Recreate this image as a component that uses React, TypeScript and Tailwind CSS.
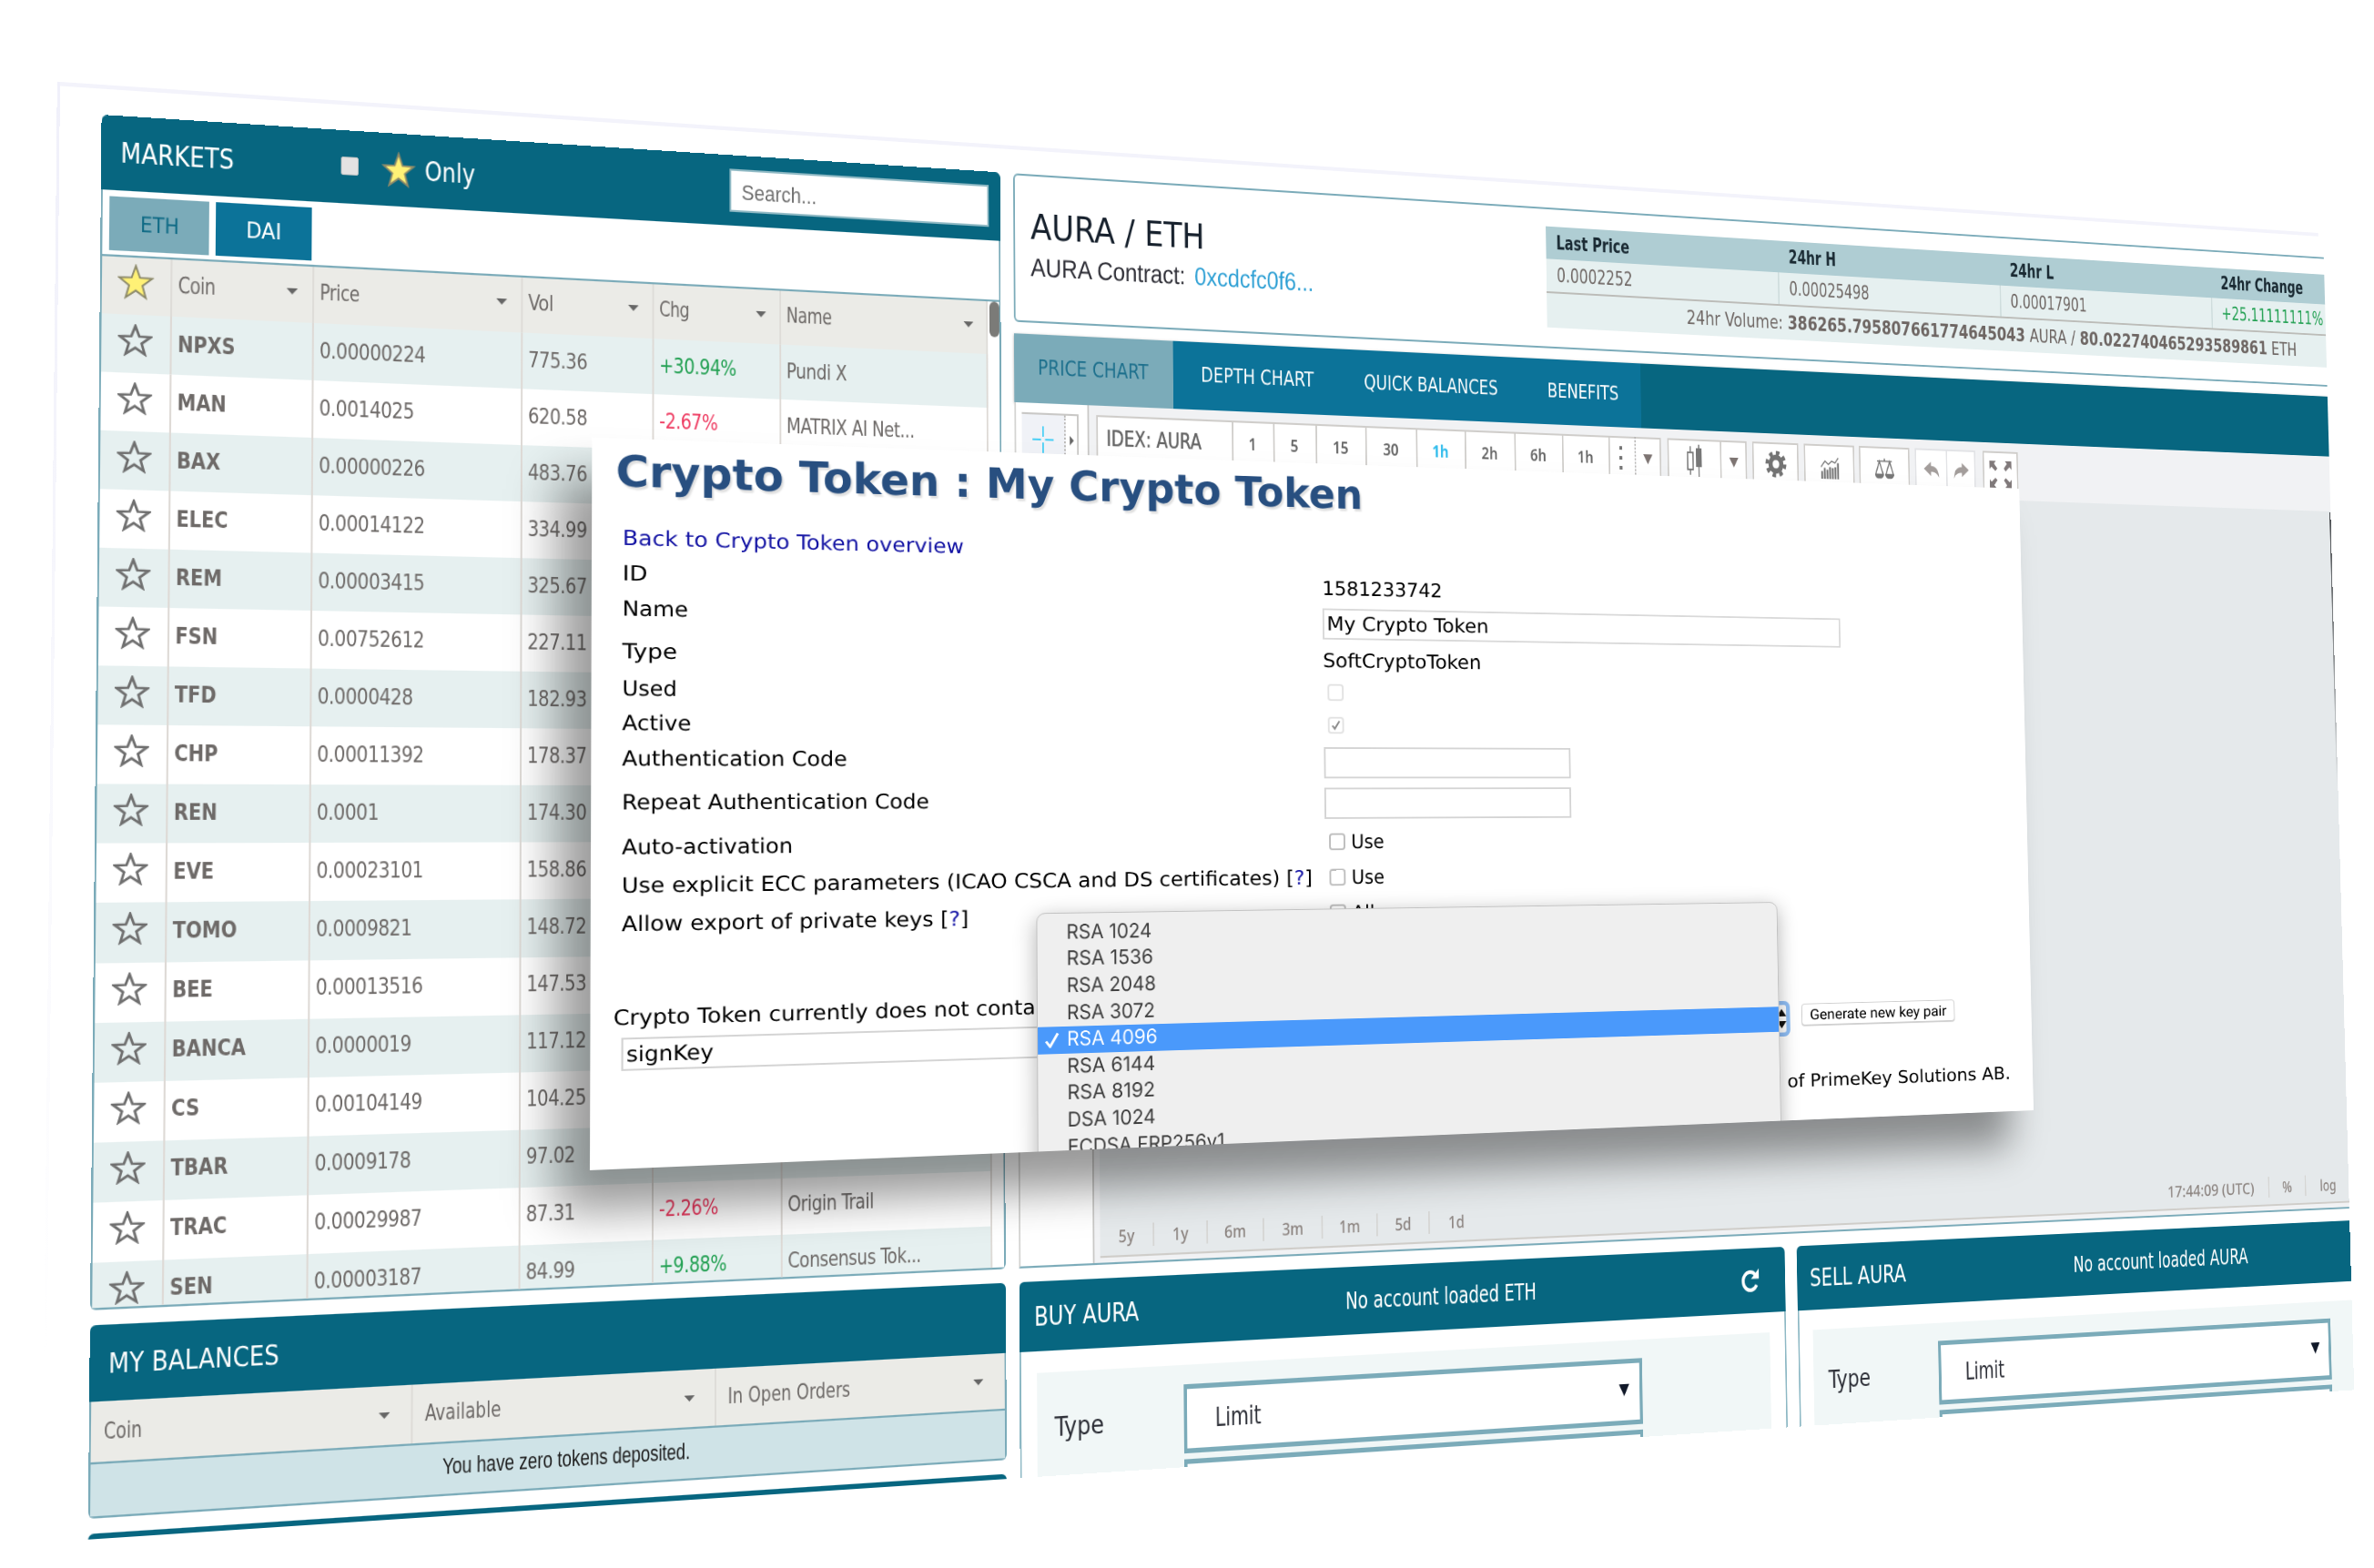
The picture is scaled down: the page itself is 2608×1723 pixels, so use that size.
import { useLayoutEffect, useRef, useState, type ReactNode } from "react";

type Pt = [number, number];

/* Projects a w × h box onto the quadrilateral given as TL, TR, BR, BL. */
function project(w: number, h: number, [p0, p1, p2, p3]: [Pt, Pt, Pt, Pt]) {
  const dx1 = p1[0] - p2[0];
  const dy1 = p1[1] - p2[1];
  const dx2 = p3[0] - p2[0];
  const dy2 = p3[1] - p2[1];
  const sx = p0[0] - p1[0] + p2[0] - p3[0];
  const sy = p0[1] - p1[1] + p2[1] - p3[1];
  const det = dx1 * dy2 - dx2 * dy1;
  const g = (sx * dy2 - dx2 * sy) / det;
  const k = (dx1 * sy - sx * dy1) / det;
  const a = p1[0] - p0[0] + g * p1[0];
  const b = p3[0] - p0[0] + k * p3[0];
  const d = p1[1] - p0[1] + g * p1[1];
  const e = p3[1] - p0[1] + k * p3[1];
  return `matrix3d(${[a / w, d / w, 0, g / w, b / h, e / h, 0, k / h, 0, 0, 1, 0, p0[0], p0[1], 0, 1].join(",")})`;
}

const BOARD = project(2880, 1344, [
  [111.6, 126],
  [2552.6, 282.7],
  [2586, 1527.3],
  [96.6, 1691.7],
]);

const DIALOG = project(1690, 800, [
  [650.4, 480.5],
  [2218, 537],
  [2233.9, 1220],
  [648, 1286],
]);

/* Text condensed or expanded to an exact width. */
function Fit({ w, children, className = "" }: { w: number; children: ReactNode; className?: string }) {
  const ref = useRef<HTMLSpanElement>(null);
  const [s, setS] = useState(1);
  useLayoutEffect(() => {
    if (ref.current) setS(w / ref.current.offsetWidth);
  }, [w]);
  return (
    <span className={`inline-flex shrink-0 ${className}`} style={{ width: w }}>
      <span ref={ref} className="shrink-0 origin-left whitespace-pre" style={{ transform: `scaleX(${s})` }}>
        {children}
      </span>
    </span>
  );
}

const STAR = "18,2 22.1,13.2 34,13.6 24.6,20.9 27.9,32.4 18,25.7 8.1,32.4 11.4,20.9 2,13.6 13.9,13.2";

function Star({ filled = false, className = "" }: { filled?: boolean; className?: string }) {
  return (
    <svg viewBox="0 0 36 35" preserveAspectRatio="none" className={`shrink-0 ${className}`}>
      <polygon points={STAR} fill={filled ? "#fff176" : "none"} stroke={filled ? "#8d8a6a" : "#6f6f6f"} strokeWidth={filled ? 1.8 : 2.7} />
    </svg>
  );
}

function Caret() {
  return (
    <svg viewBox="0 0 12 6" className="h-[6px] w-[13px] shrink-0">
      <path d="M0 0h12L6 6z" fill="#666" />
    </svg>
  );
}

type Row = [string, string, string, string?, string?];
const ROWS: Row[] = [
  ["NPXS", "0.00000224", "775.36", "+30.94%", "Pundi X"],
  ["MAN", "0.0014025", "620.58", "-2.67%", "MATRIX AI Net..."],
  ["BAX", "0.00000226", "483.76"],
  ["ELEC", "0.00014122", "334.99"],
  ["REM", "0.00003415", "325.67"],
  ["FSN", "0.00752612", "227.11"],
  ["TFD", "0.0000428", "182.93"],
  ["CHP", "0.00011392", "178.37"],
  ["REN", "0.0001", "174.30"],
  ["EVE", "0.00023101", "158.86"],
  ["TOMO", "0.0009821", "148.72"],
  ["BEE", "0.00013516", "147.53"],
  ["BANCA", "0.0000019", "117.12"],
  ["CS", "0.00104149", "104.25"],
  ["TBAR", "0.0009178", "97.02"],
  ["TRAC", "0.00029987", "87.31", "-2.26%", "Origin Trail"],
  ["SEN", "0.00003187", "84.99", "+9.88%", "Consensus Tok..."],
];

function HeadCell({ label, className, w }: { label: string; className: string; w: number }) {
  return (
    <div className={`flex shrink-0 items-center justify-between border-r-2 border-[#dedcd8] pr-[15px] pb-[6px] pl-[6px] ${className}`}>
      <Fit w={w}>{label}</Fit>
      <Caret />
    </div>
  );
}

function Markets() {
  return (
    <section className="flex h-[1132px] shrink-0 flex-col overflow-hidden rounded-md">
      <header className="flex h-[72px] shrink-0 items-center bg-[#076680] pl-[20px] text-[26px] text-white">
        <Fit w={119}>MARKETS</Fit>
        <span className="ml-[114px] h-[18px] w-[19px] -translate-y-px rounded-[2px] border border-[#c9c9c9] bg-[#e4e2e2]" />
        <Star filled className="ml-[25px] h-[36px] w-[37px]" />
        <Fit w={56} className="ml-[10px]">
          Only
        </Fit>
        <div className="mr-[14px] ml-auto flex h-[44px] w-[309px] items-center border-2 border-[#8fb9c4] bg-white pt-[3px] pl-[12px] font-[Liberation_Sans] text-[22px] text-[#6f6f6f]">
          Search...
        </div>
      </header>
      <div className="flex min-h-0 flex-1 flex-col border-2 border-t-0 border-[#7babb9] bg-white">
        <div className="flex h-[64px] shrink-0 items-start gap-[7px] border-b-2 border-[#7babb9] pt-[6px] pl-[7px] text-[21px]">
          <div className="flex h-[52px] w-[104px] items-center justify-center bg-[#7babb9] text-[#0f6a85]">
            <Fit w={41}>ETH</Fit>
          </div>
          <div className="flex h-[52px] w-[102px] items-center justify-center bg-[#0c7399] text-white">
            <Fit w={38}>DAI</Fit>
          </div>
        </div>
        <div className="flex min-h-0 flex-1">
          <div className="w-[993px] overflow-hidden text-[22px] tracking-[-0.5px] text-[#6e6a68]">
            <div className="flex h-[55px] bg-[#ebebe7]">
              <div className="flex w-[73px] shrink-0 items-center justify-center border-r-2 border-[#dedcd8] pr-[2px]">
                <Star filled className="-mt-2 h-[35px] w-[38px]" />
              </div>
              <HeadCell label="Coin" w={39} className="w-[150px]" />
              <HeadCell label="Price" w={43} className="w-[228px]" />
              <HeadCell label="Vol" w={28} className="w-[148px]" />
              <HeadCell label="Chg" w={34} className="w-[147px]" />
              <HeadCell label="Name" w={53} className="w-[247px]" />
            </div>
            {ROWS.map(([coin, price, vol, chg, name], i) => (
              <div key={coin} className={`flex h-[56.060px] ${i % 2 ? "bg-white" : "bg-[#e6f0f0]"}`}>
                <div className="flex w-[73px] shrink-0 items-center justify-center border-r-2 border-[#dedad6] pr-[2px]">
                  <Star className="-mt-[7px] h-[31px] w-[36px]" />
                </div>
                <div className="flex w-[150px] shrink-0 items-center border-r-2 border-[#dedad6] pb-[3px] pl-[6px] font-bold tracking-normal">
                  {coin}
                </div>
                <div className="flex w-[228px] shrink-0 items-center border-r-2 border-[#dedad6] pb-[3px] pl-[6px]">{price}</div>
                <div className="flex w-[148px] shrink-0 items-center border-r-2 border-[#dedad6] pb-[3px] pl-[6px]">{vol}</div>
                <div
                  className={`flex w-[147px] shrink-0 items-center border-r-2 border-[#dedad6] pb-[3px] pl-[6px] ${
                    chg?.startsWith("-") ? "text-[#ee3a60]" : "text-[#22a052]"
                  }`}
                >
                  {chg}
                </div>
                <div className="flex w-[247px] shrink-0 items-center border-r-2 border-[#dedad6] pb-[3px] pl-[6px] whitespace-nowrap">{name}</div>
              </div>
            ))}
          </div>
          <div className="ml-[2px] h-[37px] w-[12px] rounded-full bg-[#7b7b78]" />
        </div>
      </div>
    </section>
  );
}

function Balances() {
  return (
    <section className="flex h-[179px] shrink-0 flex-col overflow-hidden rounded-md">
      <header className="flex h-[71px] shrink-0 items-center bg-[#076680] pl-[19px] text-[26px] text-white">
        <Fit w={176}>MY BALANCES</Fit>
      </header>
      <div className="flex min-h-0 flex-1 flex-col border-2 border-t-0 border-[#7babb9] text-[22px] text-[#6e6a68]">
        <div className="flex h-[58px] border-b-2 border-[#7babb9] bg-[#ebebe7]">
          <div className="flex w-[335px] items-center justify-between border-r-2 border-[#dedcd8] pr-[22px] pl-[13px]">
            <Fit w={39}>Coin</Fit>
            <Caret />
          </div>
          <div className="flex w-[335px] items-center justify-between border-r-2 border-[#dedcd8] pr-[22px] pl-[13px]">
            <Fit w={82}>Available</Fit>
            <Caret />
          </div>
          <div className="flex flex-1 items-center justify-between pr-[25px] pl-[13px]">
            <Fit w={141}>In Open Orders</Fit>
            <Caret />
          </div>
        </div>
        <div className="flex flex-1 items-center justify-center bg-[#cfe3e7] pb-1 font-[Liberation_Sans] text-[#1c1c1c]">
          <Fit w={273}>You have zero tokens deposited.</Fit>
        </div>
      </div>
    </section>
  );
}

const STATS: [string, string, number, number][] = [
  ["Last Price", "0.0002252", 101, 105],
  ["24hr H", "0.00025498", 69, 117],
  ["24hr L", "0.00017901", 67, 117],
  ["24hr Change", "+25.11111111%", 132, 164],
];

function PairSummary() {
  return (
    <section className="flex h-[156px] shrink-0 rounded-md border-2 border-[#7babb9] bg-white">
      <div className="flex w-[689px] shrink-0 flex-col pt-[31px] pl-[19px]">
        <div className="flex h-[45px] items-center text-[37px] text-[#16202c]">
          <Fit w={218}>AURA / ETH</Fit>
        </div>
        <div className="flex h-[40px] items-center font-[Liberation_Sans] text-[27px] text-[#2e2e36]">
          <Fit w={194}>AURA Contract:</Fit>
          <Fit w={154} className="ml-[11px] text-[#2c9fd4]">
            0xcdcfc0f6...
          </Fit>
        </div>
      </div>
      <div className="mt-[19px] flex h-[112px] w-[1308px] shrink-0 flex-col bg-[#e6f0f0] text-[22px] text-[#6e6663]">
        <div className="flex h-[36px] bg-[#afcdd3] font-bold text-[#1a2a33]">
          {STATS.map(([k, , w]) => (
            <div key={k} className="flex w-[327px] items-center pl-[14px]">
              <Fit w={w}>{k}</Fit>
            </div>
          ))}
        </div>
        <div className="flex h-[38px] border-b-2 border-[#bcbcb8]">
          {STATS.map(([k, v, , w], i) => (
            <div key={k} className={`flex w-[327px] items-center border-r-2 border-[#cfdddd] pl-[14px] ${i === 3 ? "text-[#22a052]" : ""}`}>
              <Fit w={w}>{v}</Fit>
            </div>
          ))}
        </div>
        <div className="flex flex-1 items-center justify-center">
          <Fit w={920}>
            24hr Volume: <b>386265.795807661774645043</b> AURA / <b>80.022740465293589861</b> ETH
          </Fit>
        </div>
      </div>
    </section>
  );
}

const BTN = "flex h-[58px] items-center justify-center bg-white border-t-2 border-[#cfcdca] pb-[12px]";

function Tool({ className, children }: { className: string; children?: ReactNode }) {
  return <div className={`${BTN} shrink-0 ${className}`}>{children}</div>;
}

function DropTri() {
  return (
    <svg viewBox="0 0 14 12" className="h-[11px] w-[15px]">
      <path d="M0 0h14L7 12z" fill="#7d7472" />
    </svg>
  );
}

function Toolbar() {
  return (
    <div className="flex h-[66px] shrink-0 pt-[10px] pl-[9px] text-[18px] font-semibold text-[#666]">
      <Tool className="w-[171px] border-l-2 text-[23px]">
        <span className="font-[DejaVu_Sans_Condensed] font-normal">
          <Fit w={120} className="mr-[28px] [text-shadow:0_0_1px_#666]">
            IDEX: AURA
          </Fit>
        </span>
      </Tool>
      <Tool className="w-[53px] border-l-2 pr-[2px]">1</Tool>
      <Tool className="w-[55px] border-l-2 pr-[2px]">5</Tool>
      <Tool className="w-[65px] border-l-2 pr-[2px]">15</Tool>
      <Tool className="w-[67px] border-l-2 pr-[2px]">30</Tool>
      <Tool className="w-[65px] border-l-2 bg-[#f0f2f7] pr-[2px] font-bold text-[#33bdec]">1h</Tool>
      <Tool className="w-[67px] border-l-2 pr-[2px]">2h</Tool>
      <Tool className="w-[65px] border-l-2 pr-[2px]">6h</Tool>
      <Tool className="w-[64px] border-l-2 pr-[2px]">1h</Tool>
      <Tool className="w-[36px] border-l-2 pr-[4px]">
        <svg viewBox="0 0 4 26" className="h-[26px] w-[4px]" fill="#777">
          <path d="M0 0h4v4H0zM0 11h4v4H0zM0 22h4v4H0z" />
        </svg>
      </Tool>
      <div className="h-[58px] w-0 border-l-2 border-dotted border-[#b9b7b5]" />
      <Tool className="w-[35px] border-r-2">
        <DropTri />
      </Tool>
      <Tool className="ml-[9px] w-[74px] border-l-2">
        <svg viewBox="0 0 22 36" className="h-[36px] w-[22px]">
          <path d="M5 2v6M5 28v6" stroke="#777" strokeWidth="1.6" />
          <rect x="1.2" y="9" width="7.6" height="19" fill="none" stroke="#777" strokeWidth="1.8" />
          <path d="M17 0v36" stroke="#777" strokeWidth="1.6" />
          <rect x="13" y="4" width="8" height="21" fill="#777" />
        </svg>
      </Tool>
      <Tool className="w-[38px] border-r-2 border-l-2">
        <DropTri />
      </Tool>
      <Tool className="ml-[8px] w-[66px] border-r-2 border-l-2">
        <svg viewBox="0 0 32 32" className="h-[31px] w-[31px]" fill="none" stroke="#737373">
          <circle cx="16" cy="16" r="8" strokeWidth="6" />
          <circle cx="16" cy="16" r="13" strokeWidth="5" strokeDasharray="5.1 5.1" />
        </svg>
      </Tool>
      <Tool className="ml-[8px] w-[73px] border-r-2 border-l-2">
        <svg viewBox="0 0 28 26" className="mt-[4px] h-[25px] w-[28px]" fill="none" stroke="#777">
          <path d="M1 12l6-7 5 4 5-4 5 2 5-6" strokeWidth="1.5" />
          <path d="M2.5 26v-9M6.5 26V13M10.5 26V15M14.5 26V12M18.5 26V13M22.5 26V12M26.5 26V7" strokeWidth="2.6" />
        </svg>
      </Tool>
      <Tool className="ml-[7px] w-[74px] border-r-2 border-l-2">
        <svg viewBox="0 0 30 24" className="mt-[2px] h-[24px] w-[30px]" fill="none" stroke="#777" strokeWidth="1.7">
          <path d="M4 3.5h22M15 .5v3M7.500 4L2 18.500h11zM22.500 4L17 18.500h11z" />
          <path d="M2 19.500c1 4 10 4 11 0zM17 19.500c1 4 10 4 11 0z" fill="#777" />
        </svg>
      </Tool>
      <Tool className="ml-[8px] w-[46px] border-l-2 border-[#e2e3e6]">
        <svg viewBox="0 0 24 20" className="h-[19px] w-[25px]" fill="#a39d9b">
          <path d="M0 8.500L11 0v5c7 0 12 4 12.500 14C21 14 17 12 11 12v5z" />
        </svg>
      </Tool>
      <Tool className="w-[44px] border-r-2 border-l-2 border-[#e2e3e6]">
        <svg viewBox="0 0 24 20" className="h-[19px] w-[25px] -scale-x-100" fill="#a39d9b">
          <path d="M0 8.500L11 0v5c7 0 12 4 12.500 14C21 14 17 12 11 12v5z" />
        </svg>
      </Tool>
      <Tool className="ml-[11px] w-[53px] border-r-2 border-l-2">
        <svg viewBox="0 0 34 32" className="mt-[4px] h-[31px] w-[33px]" fill="#80797a">
          <path d="M0 0h10l-3 3 5 6-3 3-6-5-3 3zM34 0H24l3 3-5 6 3 3 6-5 3 3zM0 32h10l-3-3 5-6-3-3-6 5-3-3zM34 32H24l3-3-5-6 3-3 6 5 3-3z" />
        </svg>
      </Tool>
    </div>
  );
}

const RANGES: [string, string][] = [
  ["5y", "w-[67px] border-r-2"],
  ["1y", "w-[67px] border-r-2"],
  ["6m", "w-[71px] border-r-2"],
  ["3m", "w-[75px] border-r-2"],
  ["1m", "w-[71px] border-r-2"],
  ["5d", "w-[68px] border-r-2"],
  ["1d", "w-[70px]"],
];

function Chart() {
  return (
    <section className="flex h-[964px] shrink-0 flex-col">
      <nav className="flex h-[72px] shrink-0 overflow-hidden bg-[#076680] text-[22px] text-white shadow-[0_1px_3px_rgba(0,0,0,.35)]">
        <div className="flex w-[198px] items-center justify-center bg-[#7babb9] pr-[2px] pb-[2px] text-[#1c6f8c]">
          <Fit w={138}>PRICE CHART</Fit>
        </div>
        <div className="flex items-center bg-[#0c7399] pb-[2px]">
          <Fit w={145} className="mr-[66px] ml-[35px]">
            DEPTH CHART
          </Fit>
          <Fit w={179} className="mr-[67px]">
            QUICK BALANCES
          </Fit>
          <Fit w={98} className="mr-[31px]">
            BENEFITS
          </Fit>
        </div>
      </nav>
      <div className="flex min-h-0 flex-1 border-b-2 border-l-2 border-b-[#7babb9] border-l-[#d4d4d2] bg-[#f1f2f4] font-[Noto_Sans]">
        <div className="w-[90px] shrink-0 border-r-2 border-[#c9c8c6] bg-white pt-[10px] pl-[7px]">
          <div className="flex h-[58px] w-[70px] border-t-2 border-r-2 border-[#c9c8c6]">
            <div className="flex w-[54px] items-center justify-center border-r-2 border-dotted border-[#b9b7b5] bg-[#f0f2f7] pb-[4px]">
              <svg viewBox="0 0 26 28" className="h-[28px] w-[26px]" stroke="#4fd0f5" strokeWidth="2">
                <path d="M13 0v11M13 17v11M0 14h10.500M15.500 14H26" />
              </svg>
            </div>
            <div className="flex flex-1 items-center justify-center pb-[4px]">
              <svg viewBox="0 0 6 12" className="h-[12px] w-[5px]">
                <path d="M0 0l6 6-6 6z" fill="#666" />
              </svg>
            </div>
          </div>
        </div>
        <div className="flex min-w-0 flex-1 flex-col">
          <Toolbar />
          <div className="mb-[5px] ml-[7px] flex flex-1 flex-col justify-end border-b-2 border-[#cfcdc9] bg-[#e5e9eb]">
            <div className="flex h-[37px] items-center pb-[3px] text-[18px] font-medium text-[#8c8480]">
              {RANGES.map(([r, c]) => (
                <div key={r} className={`flex h-[24px] items-center justify-center border-[#d6d6d4] ${c}`}>
                  {r}
                </div>
              ))}
              <Fit w={135} className="ml-[980px]">
                17:44:09 (UTC)
              </Fit>
              <div className="ml-[22px] flex h-[24px] w-[60px] items-center justify-center border-r-2 border-l-2 border-[#d6d6d4]">%</div>
              <Fit w={26} className="ml-[22px]">
                log
              </Fit>
            </div>
          </div>
        </div>
      </div>
    </section>
  );
}

function OrderForm({
  title,
  titleW,
  note,
  noteW,
  noteML,
  refresh = false,
}: {
  title: string;
  titleW: number;
  note: string;
  noteW: number;
  noteML: string;
  refresh?: boolean;
}) {
  return (
    <section className="flex h-[260px] w-[1001px] shrink-0 flex-col overflow-hidden rounded-t-md">
      <header className="flex h-[71px] shrink-0 items-center bg-[#076680] pl-[18px] text-[26px] text-white">
        <Fit w={titleW}>{title}</Fit>
        <Fit w={noteW} className={`text-[24px] ${noteML}`}>
          {note}
        </Fit>
        {refresh && (
          <svg viewBox="0 0 28 28" className="mr-[36px] ml-auto h-[28px] w-[27px]" fill="none">
            <path d="M23.500 18.500A10.300 10.300 0 1 1 21.500 6.500" stroke="#fff" strokeWidth="4.200" />
            <path d="M27 0v11.500H15.500z" fill="#fff" />
          </svg>
        )}
      </header>
      <div className="flex-1 border-2 border-t-0 border-[#8db8c4] bg-white pt-[22px] pr-[21px] pl-[19px]">
        <div className="flex h-full flex-col bg-[#f1f7f7] pt-[20px] text-[26px] text-[#2e3038]">
          <div className="flex h-[71px] items-center pl-[21px]">
            <Fit w={60}>Type</Fit>
            <div className="ml-[99px] flex h-[71px] w-[599px] items-center justify-between border-[5px] border-x-4 border-[#7babb9] bg-white pr-[14px] pl-[35px]">
              <Fit w={58}>Limit</Fit>
              <svg viewBox="0 0 14 13" className="mb-[4px] h-[13px] w-[14px]">
                <path d="M0 0h14L7 13z" fill="#101828" />
              </svg>
            </div>
          </div>
          <div className="mt-[6px] ml-[180px] h-[71px] w-[599px] border-[5px] border-x-4 border-[#7babb9] bg-white" />
        </div>
      </div>
    </section>
  );
}

function Check({ muted = false, checked = false }: { muted?: boolean; checked?: boolean }) {
  return (
    <span
      className={`ml-[5px] flex h-[20px] w-[19px] shrink-0 items-center justify-center rounded-[4px] border-2 bg-white ${
        muted ? "mb-[6px] border-[#e2e2e2]" : "border-[#bdbdbd]"
      }`}
    >
      {checked && (
        <svg viewBox="0 0 12 13" className="h-[12px] w-[11px]" fill="none">
          <path d="M1.500 7l3 4L10.500 1" stroke="#8b8b8b" strokeWidth="2.200" />
        </svg>
      )}
    </span>
  );
}

function Field({ label, w, h, lift = "", children }: { label: ReactNode; w: number; h: string; lift?: string; children?: ReactNode }) {
  return (
    <div className={`flex items-center pl-[31px] ${h}`}>
      <div className={`w-[763px] shrink-0 ${lift}`}>
        <Fit w={w}>{label}</Fit>
      </div>
      {children}
    </div>
  );
}

const KEYS: [string, number][] = [
  ["RSA 1024", 95],
  ["RSA 1536", 97],
  ["RSA 2048", 100],
  ["RSA 3072", 98],
  ["RSA 4096", 101],
  ["RSA 6144", 98],
  ["RSA 8192", 98],
  ["DSA 1024", 98],
  ["ECDSA FRP256v1", 176],
];

function Help() {
  return (
    <>
      {" ["}
      <span className="text-[#1717a6]">?</span>]
    </>
  );
}

function TokenDialog() {
  return (
    <div className="h-[800px] w-[1690px] bg-white font-[DejaVu_Sans] shadow-[-33px_44px_46px_rgba(0,0,0,.4)]">
      <div className="relative flex h-full flex-col overflow-hidden text-[23px] text-black">
        <div className="flex h-[78px] shrink-0 items-center pb-[7px] pl-[24px] text-[48px] font-bold text-[#284f80]">
          <Fit w={819} className="[text-shadow:2px_3px_2px_rgba(0,0,0,.13)]">
            Crypto Token : My Crypto Token
          </Fit>
        </div>
        <div className="flex h-[52px] shrink-0 items-center pt-[12px] pl-[31px] text-[#1414a4]">
          <Fit w={358}>Back to Crypto Token overview</Fit>
        </div>
        <Field label="ID" w={26} h="h-[38px]">
          <Fit w={143}>1581233742</Fit>
        </Field>
        <Field label="Name" w={67} h="h-[46px]" lift="pb-[5px]">
          <div className="flex h-[37px] w-[648px] items-center border-2 border-[#d9d9d9] pt-[1px] pl-[3px]">
            <Fit w={194}>My Crypto Token</Fit>
          </div>
        </Field>
        <Field label="Type" w={56} h="h-[43px]">
          <Fit w={190}>SoftCryptoToken</Fit>
        </Field>
        <Field label="Used" w={56} h="h-[38px]">
          <Check muted />
        </Field>
        <Field label="Active" w={70} h="h-[39px]">
          <Check muted checked />
        </Field>
        <Field label="Authentication Code" w={232} h="h-[45px]" lift="pb-[6px]">
          <div className="h-[37px] w-[298px] border-2 border-[#d4d4d4]" />
        </Field>
        <Field label="Repeat Authentication Code" w={319} h="h-[50px]" lift="pb-[5px]">
          <div className="h-[37px] w-[298px] border-2 border-[#d4d4d4]" />
        </Field>
        <Field label="Auto-activation" w={175} h="h-[42px]">
          <Check />
          <Fit w={39} className="ml-[7px]">
            Use
          </Fit>
        </Field>
        <Field
          label={
            <>
              Use explicit ECC parameters (ICAO CSCA and DS certificates)
              <Help />
            </>
          }
          w={748}
          h="h-[42px]"
        >
          <Check />
          <Fit w={39} className="ml-[7px]">
            Use
          </Fit>
        </Field>
        <Field
          label={
            <>
              Allow export of private keys
              <Help />
            </>
          }
          w={361}
          h="h-[42px]"
        >
          <Check />
          <Fit w={58} className="ml-[7px]">
            Allow
          </Fit>
        </Field>
        <div className="flex h-[97px] shrink-0 items-end pb-[4px] pl-[23px]">
          <Fit w={442}>Crypto Token currently does not conta</Fit>
        </div>
        <div className="flex h-[44px] shrink-0 items-start pl-[31px]">
          <div className="mt-[6px] flex h-[36px] w-[500px] items-center border-2 border-[#d4d4d4] pl-[3px]">
            <Fit w={88}>signKey</Fit>
          </div>
          <div className="ml-[20px] flex h-[44px] w-[815px] items-center justify-end rounded-[8px] border-[5px] border-[#8fbef5] bg-white">
            <svg viewBox="0 0 12 24" className="h-[24px] w-[12px]">
              <path d="M0 9l6-9 6 9zM0 15l6 9 6-9z" fill="#111" />
            </svg>
          </div>
          <div className="mt-[4px] ml-[15px] flex h-[27px] w-[204px] items-center justify-center rounded-[4px] border border-[#cfcfcf] bg-white font-[Roboto] text-[18px] shadow-[0_1px_1px_rgba(0,0,0,.2)]">
            <Fit w={182}>Generate new key pair</Fit>
          </div>
        </div>
        <div className="mt-[36px] flex h-[40px] shrink-0 items-center pl-[1361px] text-[22px]">
          <Fit w={298}>of PrimeKey Solutions AB.</Fit>
        </div>

        <div className="absolute top-[529px] left-[466px] w-[886px] rounded-t-[10px] border border-[#c2c2c2] bg-[#efefef] pt-[7px] pb-[20px] font-[Inter] text-[23px] text-[#3d3d3d] shadow-[0_6px_24px_rgba(0,0,0,.3)]">
          {KEYS.map(([k, w], i) => (
            <div key={k} className={`flex h-[30.600px] items-center pb-[2px] pl-[7px] ${i === 4 ? "bg-[#4a99fb] text-white" : ""}`}>
              <span className="flex w-[25px] shrink-0">
                {i === 4 && (
                  <svg viewBox="0 0 16 18" className="h-[18px] w-[17px]" fill="none">
                    <path d="M1.500 10.500l4.500 6L14.500 1.500" stroke="#fff" strokeWidth="2.800" />
                  </svg>
                )}
              </span>
              <Fit w={w}>{k}</Fit>
            </div>
          ))}
        </div>
      </div>
    </div>
  );
}

export default function App() {
  return (
    <main className="relative h-[1723px] w-[2608px] overflow-hidden bg-white font-['DejaVu_Sans_Condensed','DejaVu_Sans',sans-serif] leading-none">
      <div className="relative h-[1344px] w-[2880px] origin-top-left" style={{ transform: BOARD }}>
        <div className="absolute -top-[29px] -left-[46px] h-[4px] w-[2918px] bg-[#f3f3fb]" />
        <div className="absolute -top-[29px] -left-[46px] h-[1200px] w-[3px] bg-linear-to-b from-[#f0f0fa] to-white" />
        <div className="flex h-full w-full gap-[16px] overflow-hidden">
          <div className="flex w-[1011px] shrink-0 flex-col gap-[14px]">
            <Markets />
            <Balances />
            <div className="h-[40px] shrink-0 rounded-t-md bg-[#076680]" />
          </div>
          <div className="flex w-[2020px] shrink-0 flex-col">
            <PairSummary />
            <div className="h-[12px] shrink-0" />
            <Chart />
            <div className="mt-[14px] flex gap-[17px]">
              <OrderForm title="BUY AURA" titleW={128} note="No account loaded ETH" noteW={251} noteML="ml-[261px]" refresh />
              <OrderForm title="SELL AURA" titleW={138} note="No account loaded AURA" noteW={268} noteML="ml-[248px]" />
            </div>
          </div>
        </div>
        <div className="absolute top-[307px] right-0 h-[330px] w-[2px] bg-linear-to-b from-[#4c4f52] via-[#8b8e90] to-transparent" />
      </div>
      <div className="absolute top-0 left-0 origin-top-left" style={{ transform: DIALOG }}>
        <TokenDialog />
      </div>
    </main>
  );
}
